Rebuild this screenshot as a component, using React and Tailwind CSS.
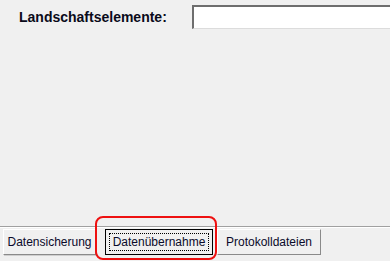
export default function App() {
  const font = { fontFamily: '"Liberation Sans", Arial, sans-serif' };
  return (
    <div className="w-[390px] h-[261px] bg-[#f0f0f0] flex flex-col overflow-hidden text-[#000000]" style={font}>
      <div className="flex items-center h-[24px] mt-[5px]">
        <div className="pl-[19px] w-[192px] text-[14px] font-bold text-[#0a0a1a] leading-none">Landschaftselemente:</div>
        <div className="flex-1 h-[24px] bg-white border-t-2 border-l-2 border-t-[#6e6e6e] border-l-[#6e6e6e] border-b border-b-[#dcdcdc]" />
      </div>
      <div className="flex-1" />
      <div className="h-[2px] border-t border-t-[#a0a0a0] border-b border-b-white" />
      <div className="relative flex items-start pl-[3px] pt-[1px] h-[33px]">
        <div className="h-[26px] w-[93px] flex items-center justify-center text-[12px] text-[#0a0a2a] bg-[#f0f0f0] border border-t-white border-l-white border-r-[#8a8a8a] border-b-[#8a8a8a] shadow-[1px_1px_0_#cfcfcf]">Datensicherung</div>
        <div className="ml-[9px] h-[26px] w-[108px] border border-black bg-[#f0f0f0] p-[3px]">
          <div className="h-full w-full border border-dotted border-black flex items-center justify-center text-[12px] text-[#0a0a2a]">Datenübernahme</div>
        </div>
        <div className="ml-[4px] h-[26px] w-[104px] flex items-center justify-center text-[12px] text-[#0a0a2a] bg-[#f0f0f0] border border-t-white border-l-white border-r-[#8a8a8a] border-b-[#8a8a8a]">Protokolldateien</div>
        <div className="absolute left-[95px] top-[-12px] w-[122px] h-[44px] border-2 border-[#ee1111] rounded-[8px]" />
      </div>
    </div>
  );
}
